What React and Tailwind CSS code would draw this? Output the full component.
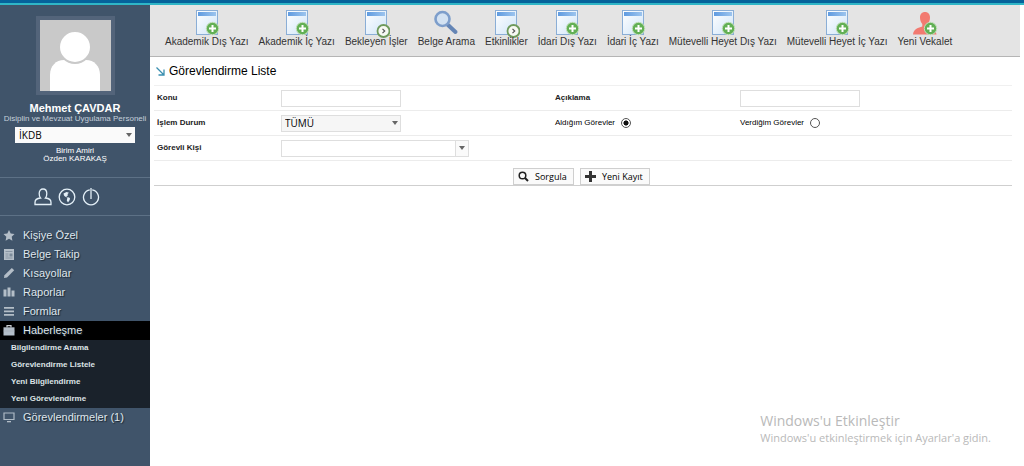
import React, { useState } from 'react';

const PlusBadge = () => (
  <g>
    <circle cx="19.500" cy="18.500" r="6.200" fill="#62b055" stroke="#c3dfbc" strokeWidth="1" />
    <path d="M19.500 15v7M16 18.500h7" stroke="#fff" strokeWidth="2" />
  </g>
);

const ClockBadge = () => (
  <g>
    <circle cx="21.500" cy="21" r="6" fill="#f7f9f3" stroke="#6f9a5c" strokeWidth="1.8" />
    <path d="M20.500 18.800l2.200 2.200-2.200 2.200" stroke="#555" strokeWidth="1.2" fill="none" />
  </g>
);

const DocIcon = ({ badge }) => (
  <svg width="28" height="28" viewBox="0 0 28 28" aria-hidden="true">
    <defs>
      <linearGradient id="sheet" x1="0" y1="0" x2="1" y2="1">
        <stop offset="0" stopColor="#ffffff" />
        <stop offset="1" stopColor="#cfe4f8" />
      </linearGradient>
      <linearGradient id="bar" x1="0" y1="0" x2="1" y2="0">
        <stop offset="0" stopColor="#5f9be0" />
        <stop offset="1" stopColor="#9cc4ee" />
      </linearGradient>
    </defs>
    <rect x="3.500" y="0.500" width="21" height="24" fill="url(#sheet)" stroke="#8aaed6" />
    <rect x="5" y="2" width="18" height="4" fill="url(#bar)" />
    {badge === 'clock' ? <ClockBadge /> : <PlusBadge />}
  </svg>
);

const SearchDocIcon = () => (
  <svg width="28" height="28" viewBox="0 0 28 28" aria-hidden="true">
    <path d="M15.500 14.500l8 7.500" stroke="#6485b5" strokeWidth="4" strokeLinecap="round" />
    <circle cx="10.500" cy="9" r="7" fill="#d3e2f2" stroke="#7d9ecb" strokeWidth="2.600" />
  </svg>
);

const PersonAddIcon = () => (
  <svg width="28" height="28" viewBox="0 0 28 28" aria-hidden="true">
    <path
      d="M14 2c3 0 5 2.200 5 5.500 0 3-1 5-2.300 6.500v2.500c3 1 8 2.500 8.800 8H2c.6-5.500 5.500-7 9.300-8V14C10 12.500 9 10.500 9 7.500 9 4.200 11 2 14 2z"
      fill="#f27a70"
    />
    <PlusBadge />
  </svg>
);

const shortcuts = [
  { text: 'Akademik Dış Yazı', icon: <DocIcon /> },
  { text: 'Akademik İç Yazı', icon: <DocIcon /> },
  { text: 'Bekleyen İşler', icon: <DocIcon badge="clock" /> },
  { text: 'Belge Arama', icon: <SearchDocIcon /> },
  { text: 'Etkinlikler', icon: <DocIcon badge="clock" /> },
  { text: 'İdari Dış Yazı', icon: <DocIcon /> },
  { text: 'İdari İç Yazı', icon: <DocIcon /> },
  { text: 'Mütevelli Heyet Dış Yazı', icon: <DocIcon /> },
  { text: 'Mütevelli Heyet İç Yazı', icon: <DocIcon /> },
  { text: 'Yeni Vekalet', icon: <PersonAddIcon /> },
];

const menu = [
  { text: 'Kişiye Özel', icon: <path d="M6 0l1.700 3.600 3.800.5-2.800 2.700.7 3.900L6 8.800l-3.400 1.900.7-3.900L.5 4.100l3.800-.5z" /> },
  {
    text: 'Belge Takip',
    icon: (
      <>
        <path d="M1 0h10v11H1z" />
        <path d="M2.500 2.500h7M2.500 5h3M2.500 7h3M2.500 9h7" stroke="#7d8c9b" strokeWidth=".8" />
        <path d="M6.500 4.500h3v3h-3z" fill="#7d8c9b" />
      </>
    ),
  },
  { text: 'Kısayollar', icon: <path d="M8.800 0l2.400 2.200L4 9.500l-3 .6.400-2.900z" /> },
  { text: 'Raporlar', icon: <path d="M.5 2.500h3v7h-3zM4.500 .5h3v9h-3zM8.500 3.500h3v6h-3z" /> },
  { text: 'Formlar', icon: <path d="M1 1h10v1.700H1zM1 4.500h10v1.700H1zM1 8h10v1.700H1z" /> },
  {
    text: 'Haberleşme',
    icon: (
      <>
        <path d="M4 2.500V.7h4v1.800" fill="none" stroke="#c9cdd1" strokeWidth="1.200" />
        <path d="M.5 2.300h11v8.200H.5z" />
        <path d="M.5 6h11" stroke="#a4abb2" strokeWidth=".6" />
      </>
    ),
    children: ['Bilgilendirme Arama', 'Görevlendirme Listele', 'Yeni Bilgilendirme', 'Yeni Görevlendirme'],
  },
  {
    text: 'Görevlendirmeler (1)',
    icon: (
      <>
        <path d="M1 1h10v6.500H1z" fill="none" stroke="#aebac5" strokeWidth="1.200" />
        <path d="M4 9h4v1.300H4z" />
      </>
    ),
  },
];

const Caret = () => (
  <svg width="6" height="4" viewBox="0 0 6 4" className="pointer-events-none absolute right-[3px] top-1/2 -mt-0.5" aria-hidden="true">
    <path d="M0 0h6L3 4z" fill="#666" />
  </svg>
);

const Sidebar = () => (
  <aside className="w-[150px] shrink-0 bg-[#40546a] text-white">
    <div className="flex flex-col items-center border-b border-[#5d7186] pb-3.5 pt-[11px]">
      <div className="bg-[#53647a] p-1">
        <svg width="71" height="71" viewBox="0 0 71 71" className="block" role="img" aria-label="Mehmet ÇAVDAR">
          <rect width="71" height="71" fill="#c9c9c9" />
          <path d="M10 71V55c0-9 6-15 14-15h22c8 0 14 6 14 15v16z" fill="#fff" />
          <circle cx="35" cy="27" r="16" fill="#fff" stroke="#c9c9c9" strokeWidth="2" />
        </svg>
      </div>
      <h1 className="mt-[7px] text-[11px] font-bold leading-[12px]">Mehmet ÇAVDAR</h1>
      <p className="whitespace-nowrap text-[8px] leading-[10px] text-[#c5d0db]">Disiplin ve Mevzuat Uygulama Personeli</p>
      <div className="relative mt-[3px] w-[120px]">
        <select aria-label="Birim" className="block h-4 w-full appearance-none bg-[#fafafa] px-1 font-['Open_Sans',sans-serif] text-[10px] leading-[16px] text-black">
          <option>İKDB</option>
        </select>
        <Caret />
      </div>
      <p className="mt-1 text-center text-[8px] leading-[8px]">
        Birim Amiri
        <br />
        Özden KARAKAŞ
      </p>
    </div>
    <div className="flex h-[38px] items-center justify-center gap-1.5 border-b border-[#5d7186] pr-4">
      <button type="button" aria-label="Profil">
        <svg width="18" height="18" viewBox="0 0 18 18" className="block" fill="none" stroke="#e4f0f8" strokeWidth="1.300">
          <path d="M6.500 10C5.500 9 5.200 7.500 5.200 5.500 5.200 2.800 6.800 1 9 1s3.800 1.800 3.800 4.500c0 2-.3 3.500-1.300 4.500 3.500.3 5.500 1.500 5.500 4.500v2H1v-2c0-3 2-4.200 5.500-4.500z" />
        </svg>
      </button>
      <button type="button" aria-label="Dil">
        <svg width="18" height="18" viewBox="0 0 18 18" className="block" fill="none" stroke="#e4f0f8" strokeWidth="1.300">
          <circle cx="9" cy="9" r="7.800" />
          <path d="M5.500 5.500l3-1.500 2.500.7-1.500 1.300.5 1.500-1.500.5.500 1.500-2-1L6 7.500zM9.500 9l2.500 1-.3 2-1.700 2.500-1.200-2z" fill="#e4f0f8" stroke="none" />
        </svg>
      </button>
      <button type="button" aria-label="Çıkış">
        <svg width="18" height="18" viewBox="0 0 18 18" className="block" fill="none" stroke="#e4f0f8" strokeWidth="1.300">
          <path d="M7.800 1.900a7.500 7.500 0 1 0 2.400 0M9 0v11" />
        </svg>
      </button>
    </div>
    <nav className="pt-2.5">
      <ul>
        {menu.map((item) => (
          <li key={item.text}>
            <a
              href="#"
              className={`flex h-[19px] items-center gap-2 pl-[3px] text-[11px] leading-[19px] text-[#dfe6ec] [text-shadow:1px_1px_1px_#1c2733] ${item.children ? 'bg-black' : ''}`}
            >
              <svg width="12" height="12" viewBox="0 0 12 12" fill="#b4bec8" aria-hidden="true">
                {item.icon}
              </svg>
              {item.text}
            </a>
            {item.children && (
              <ul className="bg-[#1a222b]">
                {item.children.map((child) => (
                  <li key={child}>
                    <a href="#" className="block h-[17px] pl-[11px] text-[8px] font-bold leading-[15px] text-[#dde2e6]">
                      {child}
                    </a>
                  </li>
                ))}
              </ul>
            )}
          </li>
        ))}
      </ul>
    </nav>
  </aside>
);

const rowClass = 'grid h-[25px] grid-cols-[124fr_274fr_185fr_272fr] items-center border-b border-[#ececec] pl-[3px]';
const labelClass = 'text-[8px] font-bold text-[#222]';
const inputClass = 'h-[17px] w-[120px] border border-[#dedede] bg-white px-1 text-[10px]';
const buttonClass =
  "flex h-[17px] items-center border border-[#cfcfcf] bg-[#fafafa] px-1 font-['Open_Sans',sans-serif] text-[9px] text-black";

const TaskForm = () => {
  const [scope, setScope] = useState('aldigim');

  return (
    <form onSubmit={(e) => e.preventDefault()}>
      <div className={rowClass}>
        <label htmlFor="konu" className={labelClass}>Konu</label>
        <div className="flex"><input id="konu" type="text" className={inputClass} /></div>
        <label htmlFor="aciklama" className={labelClass}>Açıklama</label>
        <div className="flex"><input id="aciklama" type="text" className={inputClass} /></div>
      </div>
      <div className={rowClass}>
        <label htmlFor="durum" className={labelClass}>İşlem Durum</label>
        <div className="relative w-[120px]">
          <select
            id="durum"
            className="block h-[17px] w-full appearance-none border border-[#dedede] bg-[#f6f6f6] px-[3px] font-['Open_Sans',sans-serif] text-[10px] leading-[15px] text-black"
          >
            <option>TÜMÜ</option>
          </select>
          <Caret />
        </div>
        {[
          ['aldigim', 'Aldığım Görevler'],
          ['verdigim', 'Verdiğim Görevler'],
        ].map(([value, text]) => (
          <label key={value} className="flex items-center gap-1.5 text-[8px] text-black">
            {text}
            <input
              type="radio"
              name="scope"
              checked={scope === value}
              onChange={() => setScope(value)}
              className="size-2.5 appearance-none rounded-full border border-[#555] bg-white checked:bg-[radial-gradient(circle,#111_40%,#fff_50%)]"
            />
          </label>
        ))}
      </div>
      <div className={rowClass}>
        <label htmlFor="kisi" className={labelClass}>Görevli Kişi</label>
        <div className="flex">
          <input id="kisi" type="text" className="h-[17px] w-[175px] border border-[#dedede] bg-white px-1 text-[10px]" />
          <button type="button" aria-label="Kişi seç" className="relative h-[17px] w-[13px] border border-l-0 border-[#dedede] bg-[#fafafa]">
            <Caret />
          </button>
        </div>
      </div>
      <div className="flex h-[25px] items-end justify-center gap-1.5 border-b border-[#cfcfcf] pr-[3px]">
        <button type="submit" className={`${buttonClass} w-[61px] gap-1.5`}>
          <svg width="11" height="11" viewBox="0 0 11 11" fill="none" stroke="#222" aria-hidden="true">
            <circle cx="4.500" cy="4.500" r="3.300" strokeWidth="1.500" />
            <path d="M7 7l3 3" strokeWidth="2" />
          </svg>
          Sorgula
        </button>
        <button type="button" className={`${buttonClass} w-[70px] gap-1.5`}>
          <svg width="11" height="11" viewBox="0 0 11 11" stroke="#333" strokeWidth="3" aria-hidden="true">
            <path d="M5.500 0v11M0 5.500h11" />
          </svg>
          Yeni Kayıt
        </button>
      </div>
    </form>
  );
};

const App = () => {
  return (
    <div className="flex min-h-screen flex-col bg-white font-['Liberation_Sans',Arial,sans-serif]">
      <div className="h-[5px] border-b-2 border-[#2fb5c6] bg-[#05629a]" />
      <div className="flex flex-1">
        <Sidebar />
        <main className="min-w-0 flex-1 pr-1">
          <nav className="flex h-[52px] items-start gap-2.5 border-b border-[#b5b5b5] bg-[#e4e4e4] pl-[15px] pt-[5px]">
            {shortcuts.map((item) => (
              <a key={item.text} href="#" className="flex flex-col items-center whitespace-nowrap text-[10px] leading-[10px] text-[#333]">
                {item.icon}
                <span className="-mt-px">{item.text}</span>
              </a>
            ))}
          </nav>
          <div className="pl-1 pr-2">
            <h2 className="flex h-[29px] items-center gap-1 border-b border-[#f0f0f0] pl-0.5 text-[12px] text-black">
              <svg width="9" height="9" viewBox="0 0 9 9" fill="none" stroke="#3a8fb0" strokeWidth="1.300" aria-hidden="true">
                <path d="M.5 .5L8 8M8 2.500V8H2.500" />
              </svg>
              Görevlendirme Liste
            </h2>
            <TaskForm />
          </div>
        </main>
      </div>
      <div className="pointer-events-none absolute bottom-5 right-[33px] whitespace-nowrap font-['Open_Sans',sans-serif] text-[#b9b9b9]">
        <p className="text-[14px] leading-[17px]">Windows'u Etkinleştir</p>
        <p className="text-[11px] leading-[17px]">Windows'u etkinleştirmek için Ayarlar'a gidin.</p>
      </div>
    </div>
  );
};

export default App;
